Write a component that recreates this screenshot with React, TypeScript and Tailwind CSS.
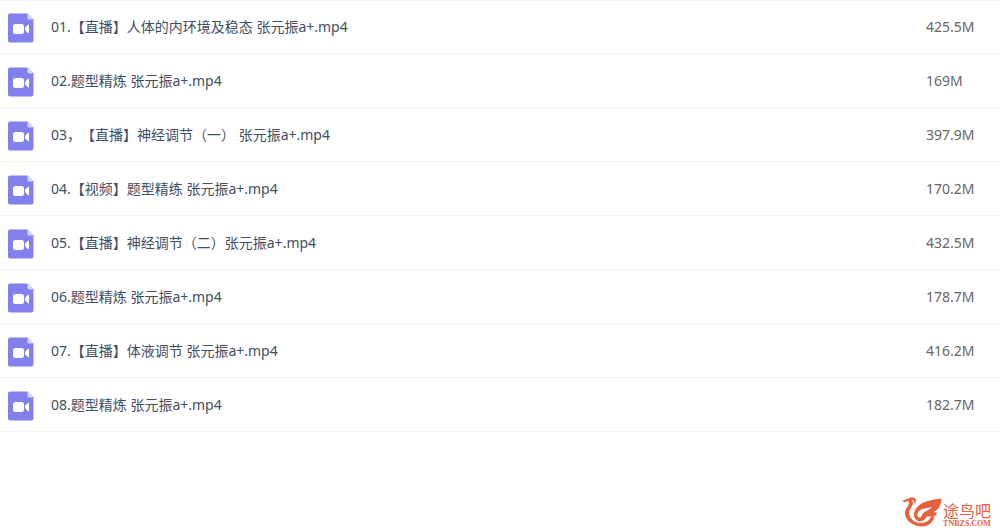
// Files in the folder, in the order they are listed
const files = [
  { name: '01.【直播】人体的内环境及稳态 张元振a+.mp4', size: '425.5M' },
  { name: '02.题型精炼 张元振a+.mp4', size: '169M' },
  { name: '03，【直播】神经调节（一） 张元振a+.mp4', size: '397.9M' },
  { name: '04.【视频】题型精练 张元振a+.mp4', size: '170.2M' },
  { name: '05.【直播】神经调节（二）张元振a+.mp4', size: '432.5M' },
  { name: '06.题型精炼 张元振a+.mp4', size: '178.7M' },
  { name: '07.【直播】体液调节 张元振a+.mp4', size: '416.2M' },
  { name: '08.题型精炼 张元振a+.mp4', size: '182.7M' },
]

// Purple document with a folded corner and a camera on it
const VideoFileIcon = () => (
  <svg width="26" height="30" viewBox="0 0 26 30" aria-hidden="true" className="block">
    <path d="M2 0.5H19.5L25.5 6.5V27.5Q25.5 29.5 23.5 29.5H2Q0 29.5 0 27.5V2.5Q0 0.5 2 0.5Z" fill="#8180ec" />
    <path d="M19.5 0.5L25.5 6.5H21Q19.5 6.5 19.5 5Z" fill="#d6d5fb" />
    <rect x="5" y="11" width="11" height="10" rx="2.5" fill="#fff" />
    <path d="M17 14.8L19.8 12Q21 11.3 21 12.6V19.4Q21 20.7 19.8 20L17 17.2Z" fill="#fff" />
  </svg>
)

// Orange bird mark of the site
const BirdLogo = () => (
  <svg width="41" height="30" viewBox="0 0 41 30" aria-hidden="true" fill="#e8603c">
    <path d="M0.5 4C3 4 4 2 7 2C8.5 0.2 11.5 -0.5 13.5 1C15.5 2.5 15.5 5.5 13 7C13.5 4.5 13 2.8 11 2.8C12.5 5 12 7.5 10.5 10C8.5 13 7.5 15.5 8.5 18.5C10 22.5 14 25.5 18 25.8C24 26.3 28.5 24 30 19.5H33.5C32 26 27 29.5 21 29.5C12.5 29.5 4.5 24 4 16.5C3.8 12 7.5 9.5 8 6.5C8.3 4.5 7 3.8 5.5 4.5C4 5.5 2.5 4.8 0.5 4Z" />
    <path d="M40.5 1.5C33 2.5 24 3.5 18.5 8C12.5 12.5 11 20.5 16 23.5C20 25.5 24.5 23 25.5 19.5H31C34 19.5 35.5 18 36 15.5C34.5 15.8 33.5 15.5 32.5 14.8C36 14 40.5 9 40.5 1.5ZM31 10C28 13.5 23.5 14 21.5 17C20.5 18.8 20.5 21 18 20.5C15.5 19.5 15.8 16.5 17.5 14.5C20.5 11 25.5 11.5 31 10Z" fillRule="evenodd" />
  </svg>
)

const App = () => {
  return (
    <div className="flex min-h-screen flex-col bg-white font-['Noto_Sans','Noto_Sans_CJK_SC',sans-serif]">
      <table className="w-full text-left text-sm">
        <tbody>
          {files.map((file) => (
            <tr key={file.name} className="h-[54px] border-b border-[#f3f4f7] first:h-[53px] first:border-t">
              <td className="w-[51px] pt-0.5 pl-2">
                <VideoFileIcon />
              </td>
              <td className="text-[#424e5f] [text-spacing-trim:space-all]">{file.name}</td>
              <td className="w-[74px] text-[#666]">{file.size}</td>
            </tr>
          ))}
        </tbody>
      </table>

      {/* Site mark in the bottom corner */}
      <footer className="mt-auto flex items-end justify-end gap-px pr-[9px] pb-[5px] text-[#e8603c]">
        <BirdLogo />
        <div className="flex flex-col items-center gap-1">
          <span className="font-['Noto_Sans_CJK_SC',sans-serif] text-[16px] leading-[14px]">途鸟吧</span>
          <span className="font-['Liberation_Serif',serif] text-[8px] leading-[6px] font-bold">TNBZS.COM</span>
        </div>
      </footer>
    </div>
  )
}

export default App
